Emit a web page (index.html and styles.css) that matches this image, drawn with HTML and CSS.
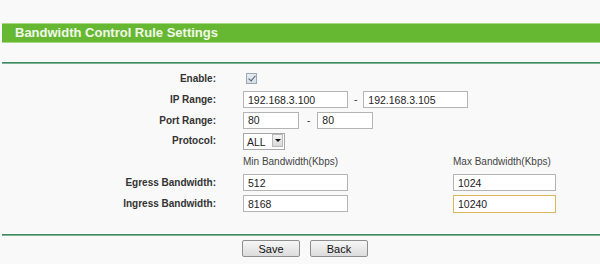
FILE: index.html
```html
<!DOCTYPE html>
<html lang="en">
<head>
    <meta charset="UTF-8">
    <meta name="viewport" content="width=device-width, initial-scale=1.0">
    <title>Bandwidth Control Rule Settings</title>
    <link rel="stylesheet" href="styles.css">
</head>
<body>
    <div class="page">
        <div class="title-bar">Bandwidth Control Rule Settings</div>
        <div class="rule"></div>

        <form class="rule-form" id="ruleForm">
            <label class="field-label" for="enable">Enable:</label>
            <div class="field wide">
                <input type="checkbox" id="enable" class="check" checked>
            </div>

            <label class="field-label" for="ipStart">IP Range:</label>
            <div class="field wide range">
                <input type="text" id="ipStart" class="text ip" value="192.168.3.100">
                <span class="dash">-</span>
                <input type="text" id="ipEnd" class="text ip" value="192.168.3.105">
            </div>

            <label class="field-label" for="portStart">Port Range:</label>
            <div class="field wide range port">
                <input type="text" id="portStart" class="text short" value="80">
                <span class="dash">-</span>
                <input type="text" id="portEnd" class="text short" value="80">
            </div>

            <label class="field-label" for="protocol">Protocol:</label>
            <div class="field wide">
                <div class="select-wrap">
                    <select id="protocol" class="select">
                        <option>ALL</option>
                        <option>TCP</option>
                        <option>UDP</option>
                    </select>
                    <span class="select-arrow"></span>
                </div>
            </div>

            <div class="field-label"></div>
            <div class="field col-head">Min Bandwidth(Kbps)</div>
            <div class="field col-head">Max Bandwidth(Kbps)</div>

            <label class="field-label" for="egressMin">Egress Bandwidth:</label>
            <div class="field">
                <input type="text" id="egressMin" class="text bw" value="512">
            </div>
            <div class="field">
                <input type="text" id="egressMax" class="text bw max" value="1024">
            </div>

            <label class="field-label" for="ingressMin">Ingress Bandwidth:</label>
            <div class="field">
                <input type="text" id="ingressMin" class="text bw" value="8168">
            </div>
            <div class="field">
                <input type="text" id="ingressMax" class="text bw max active" value="10240">
            </div>
        </form>

        <div class="rule bottom"></div>

        <div class="buttons">
            <button type="button" class="btn">Save</button>
            <button type="button" class="btn">Back</button>
        </div>
    </div>
</body>
</html>
```

FILE: styles.css
```css
* {
    margin: 0;
    padding: 0;
    box-sizing: border-box;
}

body {
    font-family: 'Liberation Sans', Arial, sans-serif;
    background: #f9f9f9;
    color: #333;
}

.page {
    padding-left: 2px;
}

.title-bar {
    margin-top: 23px;
    height: 20px;
    line-height: 18px;
    padding-left: 13px;
    background: #66b832;
    border-top: 1px solid #a6d985;
    border-bottom: 1px solid #a6d985;
    color: #f2f8ea;
    font-size: 13px;
    font-weight: bold;
}

.rule {
    margin-top: 19px;
    height: 2px;
    background: #3f8b60;
    border-bottom: 1px solid #7db395;
}

.rule.bottom {
    margin-top: 20px;
}

.rule-form {
    display: grid;
    grid-template-columns: 214px 183px 1fr;
    grid-template-rows: 21px 21px 20px 20px 22px 21px 21px;
    column-gap: 27px;
    margin-top: 4px;
    align-items: center;
}

.field-label {
    text-align: right;
    font-size: 10px;
    font-weight: bold;
    color: #333;
}

.field {
    display: flex;
    align-items: center;
}

.field.wide {
    grid-column: span 2;
}

.col-head {
    font-size: 10px;
    color: #444;
}

.check {
    appearance: none;
    -webkit-appearance: none;
    width: 11px;
    height: 11px;
    margin-left: 3px;
    border: 1px solid #9aa8b6;
    background: linear-gradient(#e8ecf0, #d6dde4);
    position: relative;
}

.check:checked::after {
    content: '';
    position: absolute;
    left: 3px;
    top: 0px;
    width: 3px;
    height: 6px;
    border-right: 1.5px solid #4a5f7a;
    border-bottom: 1.5px solid #4a5f7a;
    transform: rotate(40deg);
}

.text {
    height: 17px;
    border: 1px solid #b4b4b4;
    background: #fff;
    font-family: inherit;
    font-size: 10.5px;
    color: #222;
    padding: 0 4px;
    outline: none;
}

.text.ip {
    width: 105px;
}

.text.short {
    width: 56px;
}

.text.bw {
    width: 105px;
}

.text.bw.max {
    width: 103px;
}

.text.bw.active {
    height: 18px;
    border: 1px solid #dfb55e;
}

.dash {
    font-size: 10px;
    margin: 0 6px;
    color: #333;
}

.range.port .dash {
    margin: 0 7px 0 8px;
}

.select-wrap {
    position: relative;
    width: 42px;
    height: 17px;
}

.select {
    appearance: none;
    -webkit-appearance: none;
    width: 100%;
    height: 100%;
    border: 1px solid #a8a8a8;
    background: #fff;
    font-family: inherit;
    font-size: 10.5px;
    color: #222;
    padding-left: 3px;
    outline: none;
}

.select-arrow {
    position: absolute;
    top: 2px;
    right: 2px;
    width: 11px;
    height: 13px;
    border: 1px solid #b8b8b8;
    background: linear-gradient(#f4f4f4, #d8d8d8);
    pointer-events: none;
}

.select-arrow::after {
    content: '';
    position: absolute;
    left: 2px;
    top: 4px;
    border-left: 3px solid transparent;
    border-right: 3px solid transparent;
    border-top: 3px solid #111;
}

.buttons {
    display: flex;
    gap: 10px;
    margin-top: 4px;
    padding-left: 240px;
}

.btn {
    width: 58px;
    height: 17px;
    border: 1px solid #8e8e8e;
    border-radius: 2px;
    background: linear-gradient(#f6f6f6, #dcdcdc);
    font-family: inherit;
    font-size: 11px;
    color: #111;
    cursor: pointer;
}
```
